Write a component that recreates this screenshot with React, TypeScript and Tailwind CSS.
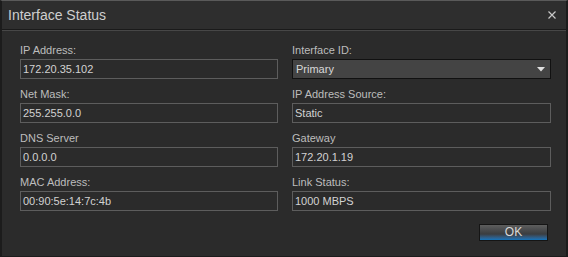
import React from 'react';

const font = { fontFamily: '"Liberation Sans", Arial, sans-serif' };

function Field({ label, value }: { label: string; value: string }) {
  return (
    <div className="flex flex-col gap-[2px]">
      <div className="h-[14px] text-[11px] leading-[14px] text-[#bdbdbd]">{label}</div>
      <div className="h-[20px] border border-[#5d5d5d] bg-[#2b2b2b] pl-[2px] text-[11px] leading-[18px] text-[#d2d2d2]">
        {value}
      </div>
    </div>
  );
}

function SelectField({ label, value }: { label: string; value: string }) {
  return (
    <div className="flex flex-col gap-[2px]">
      <div className="h-[14px] text-[11px] leading-[14px] text-[#bdbdbd]">{label}</div>
      <div className="flex h-[20px] items-center justify-between border border-[#111111] bg-[#444444] pl-[3px] pr-[5px] text-[11px] leading-[18px] text-[#d8d8d8]">
        <span>{value}</span>
        <svg width="8" height="5" viewBox="0 0 8 5">
          <path d="M0 0H8L4 4.5Z" fill="#e0e0e0" />
        </svg>
      </div>
    </div>
  );
}

export default function App() {
  return (
    <div
      className="flex h-[257px] w-[568px] flex-col overflow-hidden border-x-2 border-b border-t border-x-[#1c1c1c] border-b-[#1c1c1c] border-t-[#5a5a5a] bg-[#2b2b2b]"
      style={font}
    >
      {/* Title bar */}
      <div className="flex h-[28px] items-center justify-between bg-[#2e2e2e] pl-[6px] pr-[10px]">
        <span className="text-[14px] text-[#cfcfcf]">Interface Status</span>
        <svg width="8" height="8" viewBox="0 0 8 8">
          <path d="M0.5 0.5L7.5 7.5M7.5 0.5L0.5 7.5" stroke="#c8c8c8" strokeWidth="1.2" />
        </svg>
      </div>
      <div className="h-px bg-[#1a1a1a]" />
      <div className="h-px bg-[#474747]" />

      {/* Body */}
      <div className="flex flex-1 flex-col pl-[18px] pr-[15px] pt-[12px]">
        <div className="grid grid-cols-[258px_259px] gap-x-[14px] gap-y-[8px]">
          <Field label="IP Address:" value="172.20.35.102" />
          <SelectField label="Interface ID:" value="Primary" />
          <Field label="Net Mask:" value="255.255.0.0" />
          <Field label="IP Address Source:" value="Static" />
          <Field label="DNS Server" value="0.0.0.0" />
          <Field label="Gateway" value="172.20.1.19" />
          <Field label="MAC Address:" value="00:90:5e:14:7c:4b" />
          <Field label="Link Status:" value="1000 MBPS" />
        </div>
        <div className="mt-[13px] flex justify-end pr-[3px]">
          <button className="h-[17px] w-[69px] border border-[#151515] bg-gradient-to-b from-[#5e5e5e] via-[#3a3d40] via-60% to-[#0a74bc] text-[12px] leading-[15px] text-[#d8d8d8]">
            OK
          </button>
        </div>
      </div>
    </div>
  );
}
